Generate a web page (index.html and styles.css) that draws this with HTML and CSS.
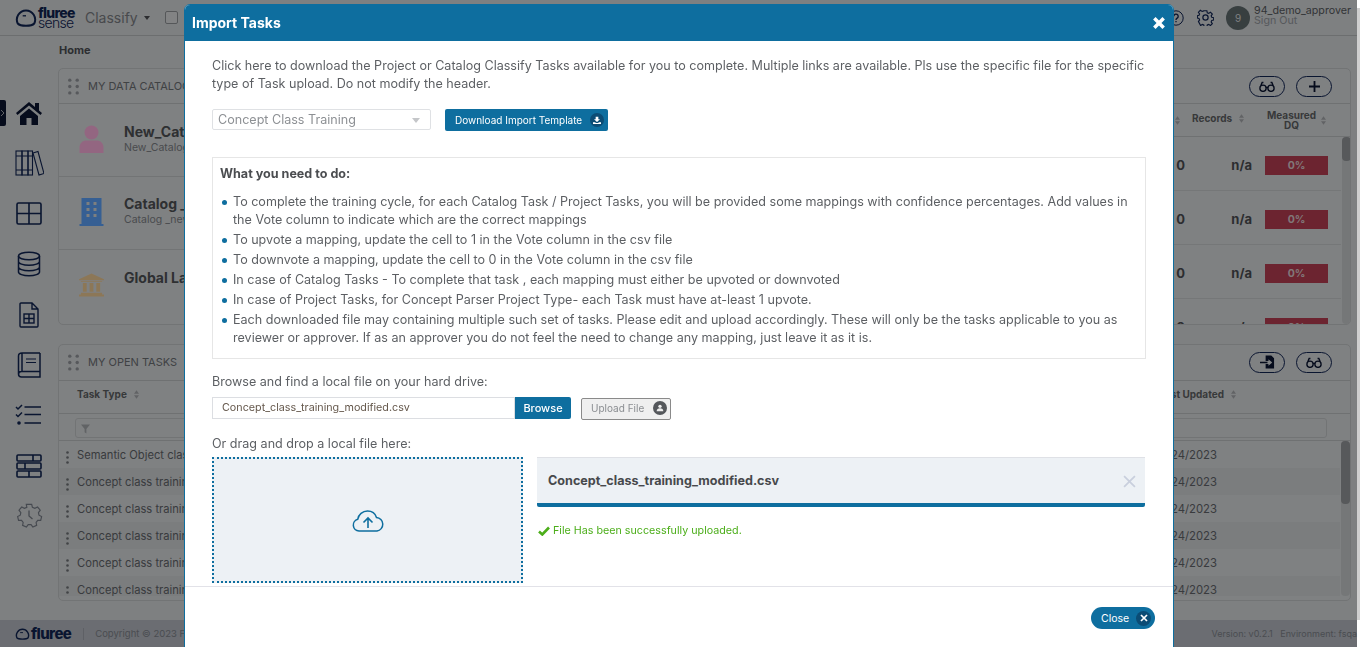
FILE: index.html
```html
<!DOCTYPE html>
<html lang="en">
<head>
<meta charset="utf-8">
<title>Import Tasks</title>
<link rel="stylesheet" href="styles.css">
</head>
<body>
<svg class="defs" width="0" height="0" aria-hidden="true">
  <symbol id="sort" viewBox="0 0 6 10"><path d="M3 0 6 4H0zM3 10 0 6h6z"/></symbol>
  <symbol id="grip" viewBox="0 0 10 16"><circle cx="1.5" cy="2" r="1.6"/><circle cx="8.5" cy="2" r="1.6"/><circle cx="1.5" cy="8" r="1.6"/><circle cx="8.5" cy="8" r="1.6"/><circle cx="1.5" cy="14" r="1.6"/><circle cx="8.5" cy="14" r="1.6"/></symbol>
  <symbol id="glasses" viewBox="0 0 18 12"><path d="M1 8a3.500 3.500 0 1 0 7 0 3.500 3.500 0 1 0-7 0M10 8a3.500 3.500 0 1 0 7 0 3.500 3.500 0 1 0-7 0M8 7.500c.7-.6 1.300-.6 2 0M1.200 7 3.500 1.500H5M16.800 7 14.500 1.500H13" fill="none" stroke="currentColor" stroke-width="1.500"/></symbol>
  <symbol id="tray" viewBox="0 0 12 12"><path d="M4 1h4v4h2.500L6 9 1.500 5H4zM0 9.500h3l1.500 1h3l1.500-1h3V12H0z" fill="currentColor"/></symbol>
  <symbol id="kebab" viewBox="0 0 3 13"><circle cx="1.500" cy="1.500" r="1.300"/><circle cx="1.500" cy="6.500" r="1.300"/><circle cx="1.500" cy="11.500" r="1.300"/></symbol>
</svg>

<div class="app">
  <header class="topbar">
    <div class="brand">
      <svg class="brand-face" viewBox="0 0 20 18"><path d="M2.500 14A8.300 8.300 0 1 1 17.500 14C15 16.800 5 16.800 2.500 14Z" fill="none" stroke="#102350" stroke-width="1.800"/><path d="M7 7h3" stroke="#102350" stroke-width="1.200"/></svg>
      <div class="brand-text"><b>fluree</b><span>sense</span></div>
    </div>
    <div class="app-name">Classify <i class="caret"></i></div>
    <span class="top-check"></span>
    <div class="top-right">
      <svg class="top-icon" viewBox="0 0 16 16"><circle cx="8" cy="8" r="7.200" fill="none" stroke="#102350" stroke-width="1"/><path d="M5.800 6.200a2.200 2.200 0 1 1 3.400 1.900c-.8.500-1.200 1-1.200 1.800M8 11v1.300" fill="none" stroke="#102350" stroke-width="1.300"/></svg>
      <svg class="top-icon gear" viewBox="0 0 24 24"><path d="M10 2h4l.6 3 2 .9 2.600-1.700 2.800 2.800-1.700 2.600.9 2 2.800.6v3.600l-2.800.6-.9 2 1.700 2.600-2.800 2.800-2.600-1.700-2 .9-.6 2.800h-4l-.6-2.800-2-.9-2.600 1.700L1.600 18l1.700-2.600-.9-2L0 12.800V9.400l2.400-.6.9-2L1.600 4.200 4.400 1.400 7 3.100l2.400-.9z" transform="translate(.5 .5) scale(.96)" fill="none" stroke="#102350" stroke-width="1.700"/><circle cx="12" cy="12" r="3.700" fill="none" stroke="#102350" stroke-width="1.700"/></svg>
      <span class="avatar">9</span>
      <div class="user"><span>94_demo_approver</span><span class="signout">Sign Out</span></div>
    </div>
  </header>

  <nav class="sidebar">
    <span class="side-toggle"><svg viewBox="0 0 6 10"><path d="M1 2l3 3-3 3" fill="none" stroke="#c7c9cc" stroke-width=".8"/></svg></span>
    <svg class="side-icon" viewBox="0 0 30 26"><path d="M2 13 15 2l6 5V3h4v7.500l3 2.500-1.500 2L15 5.500 3.500 15z M6 16 15 8.500 24 16v9h-6.500v-7h-5v7H6z" fill="#0a1430"/></svg>
    <svg class="side-icon" viewBox="0 0 30 26"><g fill="none" stroke="#102350" stroke-width="1.100"><rect x="2" y="1" width="6" height="24"/><rect x="8" y="1" width="6" height="24"/><rect x="14" y="1" width="4.500" height="24"/><path d="M19 3l5-1.500 6 22-5 1.500zM2 6h16M2 20h16"/></g></svg>
    <svg class="side-icon" viewBox="0 0 30 26"><g fill="none" stroke="#102350" stroke-width="1.600"><rect x="3" y="2" width="24" height="21" rx="1.500"/><path d="M15 2v21M3 12.500h24"/></g></svg>
    <svg class="side-icon" viewBox="0 0 30 26"><g fill="none" stroke="#102350" stroke-width="1.500"><ellipse cx="15" cy="5" rx="10.500" ry="3.800"/><path d="M4.500 5v16c0 2 4.500 3.800 10.500 3.800s10.500-1.800 10.500-3.800V5M4.500 10.500c0 2 4.500 3.800 10.500 3.800s10.500-1.800 10.500-3.800M4.500 16c0 2 4.500 3.800 10.500 3.800s10.500-1.800 10.500-3.800"/></g></svg>
    <svg class="side-icon" viewBox="0 0 30 26"><g fill="none" stroke="#102350" stroke-width="1.400"><path d="M7 1h11l6 6v17a1 1 0 0 1-1 1H7a1 1 0 0 1-1-1V2a1 1 0 0 1 1-1zM18 1v6h6"/><rect x="10" y="12" width="10" height="9"/><path d="M10 16.500h10M15 12v9"/></g></svg>
    <svg class="side-icon" viewBox="0 0 30 26"><g fill="none" stroke="#102350" stroke-width="1.500"><path d="M26 1H8C5.500 1 4.500 2.500 4.500 4v18c0 1.800 1.300 3 3 3H26v-5.500H7.500c-1.800 0-3 1.300-3 2.700M8 1v18.500M26 1v18.500"/><path d="M12 7h10M12 10.500h10" stroke-width="1.200"/></g></svg>
    <svg class="side-icon" viewBox="0 0 30 26"><g fill="none" stroke="#102350" stroke-width="1.500"><path d="M2 5l2 2 4-4M2 12.500l2 2 4-4M10.500 5H27M10.500 12.500H27M10.500 21H27"/></g><circle cx="5" cy="21" r="1.800" fill="#102350"/></svg>
    <svg class="side-icon" viewBox="0 0 30 26"><g fill="none" stroke="#102350" stroke-width="1.600"><rect x="3" y="2" width="24" height="6" rx="1"/><rect x="3" y="10" width="24" height="6" rx="1"/><rect x="3" y="18" width="24" height="6" rx="1"/><path d="M19 2v6M11 10v6M15 18v6"/></g></svg>
    <svg class="side-icon" viewBox="0 0 30 26"><g fill="none" stroke="#767c86" stroke-width="1.300"><path d="M12 1h6l.8 3.200 2.700 1.200 3-1.500 3 3.500-2 2.800.6 2.800 2.900 1.500-1 4.200-3.300.1-1.800 2.300.6 3.200-4.200 1.800-2-2.600h-3.200l-2 2.600-4.200-1.800.6-3.200-1.800-2.300-3.300-.1-1-4.200 2.900-1.500.6-2.800-2-2.800 3-3.500 3 1.500 2.700-1.200z" transform="translate(1.500 .5) scale(.9)"/><path d="M15 7.500V13l3.500 3"/></g></svg>
  </nav>

  <main class="main">
    <div class="crumb">Home</div>

    <section class="card card-catalogs">
      <div class="card-head">
        <svg class="grip"><use href="#grip"/></svg>
        <span class="card-title">MY DATA CATALOGS</span>
        <div class="pill-group">
          <span class="pill"><svg class="pill-icon"><use href="#glasses"/></svg></span>
          <span class="pill"><svg class="pill-icon plus" viewBox="0 0 12 12"><path d="M6 0v12M0 6h12" stroke="#0a1430" stroke-width="2"/></svg></span>
        </div>
      </div>
      <div class="cat-body">
        <div class="cat-list">
          <div class="cat-row">
            <svg class="cat-icon" viewBox="0 0 24 28"><circle cx="12" cy="7.500" r="7" fill="#f6abd8"/><path d="M0 28v-5c0-5 3-7.500 7-7.500h10c4 0 7 2.500 7 7.500v5z" fill="#f6abd8"/></svg>
            <div class="cat-text"><b>New_Catalog</b><span>New_Catalog</span></div>
          </div>
          <div class="cat-row">
            <svg class="cat-icon" viewBox="0 0 24 28"><path d="M2 0h20v26H2z M0 26h24v2H0z" fill="#5a9ff5"/><g fill="#d0d4d5"><rect x="7" y="4" width="3" height="3"/><rect x="14" y="4" width="3" height="3"/><rect x="7" y="10" width="3" height="3"/><rect x="14" y="10" width="3" height="3"/><rect x="7" y="16" width="3" height="3"/><rect x="14" y="16" width="3" height="3"/></g></svg>
            <div class="cat-text"><b>Catalog _new</b><span>Catalog _new</span></div>
          </div>
          <div class="cat-row">
            <svg class="cat-icon bank" viewBox="0 0 26 24"><path d="M13 0l13 6v1H0V6zM2 8h22v1H2zM4 10h4v9H4zM11 10h4v9h-4zM18 10h4v9h-4zM2 20h22v2H2zM0 22h26v2H0z" fill="#eac791"/></svg>
            <div class="cat-text"><b>Global Language</b></div>
          </div>
        </div>
        <div class="cat-table">
          <div class="cat-head">
            <div class="ch ch-a"><svg class="sort"><use href="#sort"/></svg></div>
            <div class="ch ch-b">Records<svg class="sort"><use href="#sort"/></svg></div>
            <div class="ch ch-c"><span>Measured<br>DQ</span><svg class="sort"><use href="#sort"/></svg></div>
          </div>
          <div class="cat-scroll">
            <div class="cat-rows">
              <div class="cat-data"><b>0</b><b>n/a</b><span class="dq">0%</span></div>
              <div class="cat-data"><b>0</b><b>n/a</b><span class="dq">0%</span></div>
              <div class="cat-data"><b>0</b><b>n/a</b><span class="dq">0%</span></div>
              <div class="cat-data"><b>0</b><b>n/a</b><span class="dq">0%</span></div>
            </div>
            <div class="vbar"><i class="thumb-a"></i></div>
          </div>
        </div>
      </div>
    </section>

    <section class="card card-tasks">
      <div class="card-head">
        <svg class="grip"><use href="#grip"/></svg>
        <span class="card-title">MY OPEN TASKS</span>
        <div class="pill-group">
          <span class="pill"><svg class="pill-icon file" viewBox="0 0 16 14"><path d="M6 0h6l3 3v11H6V9h3v2l4-3.500L9 4v2H6z" fill="#0a1430"/><path d="M0 7.500h8" stroke="#0a1430" stroke-width="1.500"/></svg></span>
          <span class="pill"><svg class="pill-icon"><use href="#glasses"/></svg></span>
        </div>
      </div>
      <div class="task-head">
        <b>Task Type</b><svg class="sort"><use href="#sort"/></svg>
        <b class="last-updated">Last Updated</b><svg class="sort"><use href="#sort"/></svg>
      </div>
      <div class="task-filter">
        <div class="filter-input"><svg viewBox="0 0 10 10"><path d="M0 0h10L6 5v5L4 8.500V5z"/></svg></div>
      </div>
      <div class="task-scroll">
        <div class="task-rows">
          <div class="task-row"><svg class="kebab"><use href="#kebab"/></svg><span>Semantic Object classification</span><em>11/24/2023</em></div>
          <div class="task-row"><svg class="kebab"><use href="#kebab"/></svg><span>Concept class training</span><em>11/24/2023</em></div>
          <div class="task-row"><svg class="kebab"><use href="#kebab"/></svg><span>Concept class training</span><em>11/24/2023</em></div>
          <div class="task-row"><svg class="kebab"><use href="#kebab"/></svg><span>Concept class training</span><em>11/24/2023</em></div>
          <div class="task-row"><svg class="kebab"><use href="#kebab"/></svg><span>Concept class training</span><em>11/24/2023</em></div>
          <div class="task-row"><svg class="kebab"><use href="#kebab"/></svg><span>Concept class training</span><em>11/24/2023</em></div>
        </div>
        <div class="vbar"><i class="thumb-b"></i></div>
      </div>
    </section>
  </main>

  <footer class="footer">
    <svg class="foot-face" viewBox="0 0 16 14"><path d="M2 11A6.500 6.500 0 1 1 14 11C12.500 13 3.500 13 2 11Z" fill="none" stroke="#102350" stroke-width="1.500"/><path d="M5.500 5.500h3" stroke="#102350"/></svg>
    <b class="foot-logo">fluree</b>
    <span class="foot-sep"></span>
    <span class="foot-copy">Copyright © 2023 Fluree PBC. All rights reserved.</span>
    <span class="foot-env">Version: v0.2.1 &nbsp; Environment: fsqa</span>
  </footer>
</div>
<div class="gutter"><i></i></div>

<div class="backdrop"></div>
<div class="modal">
  <div class="modal-head">
    <h1>Import Tasks</h1>
    <svg class="modal-x" viewBox="0 0 12 12"><path d="M2 2l8 8M10 2l-8 8" stroke="#fff" stroke-width="3"/></svg>
  </div>
  <div class="modal-body">
    <p class="intro">Click here to download the Project or Catalog Classify Tasks available for you to complete. Multiple links are available. Pls use the specific file for the specific type of Task upload. Do not modify the header.</p>
    <div class="template-row">
      <div class="select">Concept Class Training<i class="select-caret"></i></div>
      <button class="btn-download">Download Import Template<span class="btn-round"><svg><use href="#tray"/></svg></span></button>
    </div>
    <div class="todo">
      <h2>What you need to do:</h2>
      <ul>
        <li>To complete the training cycle, for each Catalog Task / Project Tasks, you will be provided some mappings with confidence percentages. Add values in the Vote column to indicate which are the correct mappings</li>
        <li>To upvote a mapping, update the cell to 1 in the Vote column in the csv file</li>
        <li>To downvote a mapping, update the cell to 0 in the Vote column in the csv file</li>
        <li>In case of Catalog Tasks - To complete that task , each mapping must either be upvoted or downvoted</li>
        <li>In case of Project Tasks, for Concept Parser Project Type- each Task must have at-least 1 upvote.</li>
        <li>Each downloaded file may containing multiple such set of tasks. Please edit and upload accordingly. These will only be the tasks applicable to you as reviewer or approver. If as an approver you do not feel the need to change any mapping, just leave it as it is.</li>
      </ul>
    </div>
    <label class="field-label">Browse and find a local file on your hard drive:</label>
    <div class="browse-row">
      <div class="file-input">Concept_class_training_modified.csv</div>
      <button class="btn-browse">Browse</button>
      <button class="btn-upload">Upload File<span class="btn-round grey"><svg viewBox="0 0 12 12"><circle cx="6" cy="3.500" r="2.500" fill="#eee"/><path d="M1 11c0-3 2-4.500 5-4.500s5 1.500 5 4.500z" fill="#eee"/></svg></span></button>
    </div>
    <label class="field-label drag-label">Or drag and drop a local file here:</label>
    <div class="drop-row">
      <div class="dropzone">
        <svg viewBox="0 0 32 22"><path d="M8 21H7a6 6 0 0 1-1.200-11.800C6.500 4.500 10.500 1 15.500 1c4.300 0 7.800 2.700 9 6.500A6.800 6.800 0 0 1 25 21z" fill="none" stroke="#0e6e9f" stroke-width="1.500"/><path d="M16 18V8M11.500 12.500 16 8l4.500 4.500" fill="none" stroke="#0e6e9f" stroke-width="1.600"/></svg>
      </div>
      <div class="file-col">
        <div class="file-card">
          <b>Concept_class_training_modified.csv</b>
          <svg viewBox="0 0 12 12"><path d="M1 1l10 10M11 1L1 11" stroke="#c9cfdd" stroke-width="1.600"/></svg>
        </div>
        <div class="success">
          <svg viewBox="0 0 12 10"><path d="M1 5.500 4.300 8.500 11 1.500" fill="none" stroke="#4cae1a" stroke-width="2.600"/></svg>
          File Has been successfully uploaded.
        </div>
      </div>
    </div>
  </div>
  <div class="modal-foot">
    <button class="btn-close">Close<span class="btn-round"><svg viewBox="0 0 12 12"><path d="M1.500 1.500l9 9M10.500 1.500l-9 9" stroke="#fff" stroke-width="2.600"/></svg></span></button>
  </div>
</div>
</body>
</html>
```

FILE: styles.css
```css
* { box-sizing: border-box; }
html, body { margin: 0; height: 647px; overflow: hidden; }
body {
  display: flex;
  background: #fff;
  font-family: Inter, "Liberation Sans", sans-serif;
  color: #5c5f63;
  font-size: 12px;
}
.defs { position: absolute; }
button { font-family: inherit; cursor: pointer; border: 0; }

.app {
  width: 1357px;
  height: 647px;
  flex: none;
  display: grid;
  grid-template-columns: 58px 1fr;
  grid-template-rows: 36px 1fr 27px;
  background: #d2d5d7;
}
.gutter { flex: 1; padding: 8px 0 27px; }
.gutter i { display: block; height: 100%; background: #cfcfcf; }

/* top bar */
.topbar {
  grid-column: 1 / 3;
  display: flex;
  align-items: center;
  padding-left: 15px;
  border-bottom: 1px solid #b4b7ba;
}
.brand { display: flex; align-items: center; gap: 1px; width: 70px; }
.brand-face { width: 22px; height: 20px; }
.brand-text { display: flex; flex-direction: column; color: #102350; line-height: 10px; font-size: 14px; letter-spacing: -.7px; }
.brand-text b { font-weight: 800; }
.brand-text span { font-weight: 300; }
.app-name { font-size: 14px; color: #787b80; display: flex; align-items: center; gap: 6px; }
.caret { border: 3px solid transparent; border-top: 4px solid #4a4c50; margin-top: 4px; }
.top-check { width: 13px; height: 13px; border: 1px solid #8e9195; background: #d9dbdd; margin-left: 15px; border-radius: 2px; }
.top-right { margin-left: auto; display: flex; align-items: center; }
.top-icon { width: 16px; height: 16px; margin-right: 13px; }
.top-icon.gear { width: 17px; height: 17px; margin-right: 12px; }
.avatar { width: 24px; height: 24px; border-radius: 50%; background: #5e6a6c; color: #d2d5d7; font-size: 10px; display: flex; align-items: center; justify-content: center; margin-right: 4px; }
.user { display: flex; flex-direction: column; line-height: 10px; font-size: 10.700px; width: 103px; color: #55585c; padding-bottom: 3px; }
.signout { color: #90949a; }

/* sidebar */
.sidebar { display: flex; flex-direction: column; align-items: center; padding-top: 64px; gap: 24.400px; position: relative; }
.side-toggle { position: absolute; left: 0; top: 64px; width: 6px; height: 26px; background: #0a1430; display: flex; align-items: center; border-radius: 0 2px 2px 0; }
.side-toggle svg { width: 6px; height: 10px; }
.side-icon { width: 30px; height: 26px; flex: none; }

/* main */
.main { min-width: 0; padding-right: 6px; }
.crumb { height: 32px; padding: 8px 0 0 1px; font-size: 11px; font-weight: 700; color: #4b4e52; line-height: 13px; }
.card { background: #d4d7d9; border: 1px solid #bec1c3; border-radius: 5px; overflow: hidden; }
.card-catalogs { height: 257px; }
.card-tasks { height: 257px; margin-top: 19px; }
.card-head { height: 35px; display: flex; align-items: center; padding-left: 9px; border-bottom: 1px solid #b9bcbe; }
.card-tasks .card-head { height: 36px; padding-bottom: 1px; }
.grip { width: 11px; height: 17px; fill: #92959a; flex: none; }
.card-title { font-size: 11px; color: #6b6e72; margin-left: 9px; }
.pill-group { margin-left: auto; display: flex; gap: 11px; padding-right: 18px; }
.pill { width: 36px; height: 21px; border: 1px solid #102350; border-radius: 11px; display: flex; align-items: center; justify-content: center; }
.pill-icon { width: 16px; height: 11px; color: #0a1430; }
.pill-icon.plus { width: 11px; height: 11px; }
.pill-icon.file { width: 15px; height: 14px; }

/* catalogs */
.cat-body { display: flex; height: 221px; }
.cat-list { width: 1001px; flex: none; }
.cat-row { height: 73px; display: flex; align-items: center; gap: 20px; padding: 0 0 3px 20px; border-bottom: 1px solid #bec1c3; }
.cat-row:first-child { padding-bottom: 2px; }
.cat-row:last-child { border-bottom: 0; padding-bottom: 18px; }
.cat-icon { width: 25px; height: 28px; flex: none; }
.bank { margin-top: 14px; }
.cat-text { display: flex; flex-direction: column; }
.cat-text b { font-size: 14px; line-height: 17px; color: #4e5054; }
.cat-text span { font-size: 10.500px; line-height: 16px; color: #7a7d82; }
.cat-table { flex: 1; min-width: 0; }
.cat-head { display: flex; height: 33px; border-bottom: 1px solid #b9bcbe; font-size: 10px; font-weight: 700; color: #5d5f62; align-items: center; }
.ch { display: flex; align-items: center; }
.ch-a { width: 126px; justify-content: flex-end; padding-right: 6px; }
.ch-b { width: 76px; padding: 0 0 4px 6px; gap: 7px; }
.ch-c { padding-left: 5px; gap: 5px; line-height: 10px; text-align: center; }
.sort { width: 5px; height: 9px; fill: #a2a5a9; flex: none; }
.cat-scroll { display: flex; height: 187px; overflow: hidden; }
.cat-rows { width: 281px; flex: none; }
.cat-data { height: 54px; display: grid; grid-template-columns: 125px 67px 76px; align-items: center; padding-top: 3px; border-bottom: 1px solid #c4c7c9; font-size: 13px; color: #4a4c50; text-align: right; }
.dq { margin-left: 13px; height: 19px; background: #b43c50; color: #d8c6c9; font-size: 10.500px; font-weight: 700; line-height: 19px; text-align: center; }
.vbar { width: 9px; margin-left: 1px; background: #c4c7c9; border-radius: 4px; flex: none; }
.vbar i { display: block; background: #929598; border-radius: 4px; }
.thumb-a { height: 24px; }
.thumb-b { height: 63px; }

/* tasks */
.task-head { height: 33px; display: flex; align-items: center; padding: 0 114px 6px 18px; gap: 7px; font-size: 10px; color: #5d5f62; border-bottom: 1px solid #b9bcbe; }
.last-updated { margin-left: auto; }
.task-filter { height: 27px; padding: 4px 23px 3px 16px; border-bottom: 1px solid #b9bcbe; }
.filter-input { height: 20px; border: 1px solid #bec1c3; border-radius: 3px; padding: 3px 0 0 5px; }
.filter-input svg { width: 9px; height: 10px; fill: #a2a5a9; display: block; margin-top: 2px; }
.task-scroll { display: flex; height: 155px; overflow: hidden; }
.task-rows { width: 1281px; flex: none; }
.task-row { height: 27px; display: flex; align-items: center; padding: 0 123px 0 7px; font-size: 11.200px; color: #606368; gap: 8px; }
.task-row:nth-child(even) { background: #cdd0d2; }
.kebab { width: 3px; height: 13px; fill: #6e7176; margin-top: 6px; flex: none; }
.task-row em { margin-left: auto; font-style: normal; font-size: 11.300px; }

/* footer */
.footer { grid-column: 1 / 3; background: #b2b6be; display: flex; align-items: center; padding-left: 15px; font-size: 9.500px; color: #7c8087; }
.foot-face { width: 15px; height: 14px; }
.foot-logo { font-size: 15px; font-weight: 800; color: #102350; letter-spacing: -.6px; margin-left: 1px; }
.foot-sep { width: 1px; height: 12px; background: #9da1a8; margin: 0 11px 0 12px; }
.foot-env { margin-left: auto; white-space: nowrap; font-size: 9px; }

/* modal */
.backdrop { position: fixed; left: 0; top: 0; width: 1357px; height: 647px; background: rgba(0, 0, 0, .4); }
.modal {
  position: fixed;
  left: 184px;
  top: 4px;
  width: 990px;
  height: 660px;
  background: #fff;
  border: 1px solid #0e6e9f;
  border-radius: 6px 6px 0 0;
  overflow: hidden;
}
.modal-head { height: 36px; background: #0e6e9f; display: flex; align-items: center; justify-content: space-between; padding: 0 7px 2px 7px; }
.modal-head h1 { margin: 0; font-size: 14px; font-weight: 700; color: #fff; }
.modal-x { width: 14px; height: 14px; margin-top: 2px; }
.modal-body { height: 545px; padding: 16px 27px 0 27px; font-size: 12.570px; line-height: 18px; color: #5c5f63; overflow: hidden; }
.intro { margin: 0; padding-right: 1px; }
.template-row { display: flex; gap: 14px; margin-top: 16px; }
.select { width: 219px; height: 21px; border: 1px solid #dfe1e4; border-radius: 2px; padding-left: 5px; line-height: 19px; color: #8d9094; display: flex; align-items: center; justify-content: space-between; }
.select-caret { border: 4px solid transparent; border-top: 5px solid #c4c6c9; margin: 5px 10px 0 0; }
.btn-download { height: 22px; width: 163px; background: #0e6e9f; color: #fff; border-radius: 2px; font-size: 10px; display: flex; align-items: center; justify-content: space-between; padding: 0 4px 1px 10px; }
.btn-round { width: 14px; height: 14px; border-radius: 50%; background: #0b4c75; color: #fff; display: flex; align-items: center; justify-content: center; flex: none; }
.btn-round svg { width: 8px; height: 8px; }
.btn-round.grey { background: #54575b; }
.todo { margin-top: 26px; height: 202px; border: 1px solid #e6e6e6; padding: 7px 7px; }
.todo h2 { margin: 0 0 10px; font-size: 12.570px; font-weight: 700; line-height: 18px; color: #4b4d50; }
.todo ul { margin: 0; padding: 0; list-style: none; }
.todo li { position: relative; padding-left: 13px; margin-bottom: 2px; }
.todo li::before { content: ""; position: absolute; left: 2px; top: 7px; width: 5px; height: 5px; border-radius: 50%; background: #0e6e9f; }
.field-label { display: block; margin-top: 14px; }
.browse-row { display: flex; margin-top: 6px; align-items: flex-start; }
.file-input { width: 303px; height: 22px; border: 1px solid #dcdee2; padding-left: 9px; font-size: 10.750px; line-height: 20px; color: #65584c; }
.btn-browse { width: 56px; height: 22px; padding-bottom: 2px; background: #0e6e9f; color: #fff; font-size: 11px; font-weight: 500; border-radius: 0 2px 2px 0; }
.btn-upload { width: 90px; height: 22px; margin: 1px 0 0 10px; background: #efefef; border: 1px solid #8a8a8a; border-radius: 2px; color: #8a8d91; font-size: 10px; display: flex; align-items: center; justify-content: space-between; padding: 0 3px 2px 9px; }
.drag-label { margin-top: 15px; }
.drop-row { display: flex; gap: 14px; margin-top: 4px; }
.dropzone { width: 311px; height: 126px; padding-top: 2px; background: #edf1f5; border: 2px dotted #0e6e9f; display: flex; align-items: center; justify-content: center; }
.dropzone svg { width: 32px; height: 22px; }
.file-col { flex: 1; min-width: 0; padding-right: 1px; }
.file-card { height: 50px; background: #edf1f5; border-top: 1px solid #dfe1e6; border-bottom: 4px solid #0e6e9f; border-radius: 0 0 2px 2px; display: flex; align-items: center; justify-content: space-between; padding: 1px 9px 0 11px; }
.file-card b { font-size: 12.600px; color: #47494c; }
.file-card svg { width: 13px; height: 13px; }
.success { display: flex; align-items: center; gap: 3px; margin-top: 15px; font-size: 10.730px; color: #4cae1a; padding-left: 1px; }
.success svg { width: 12px; height: 10px; }
.modal-foot { border-top: 1px solid #e2e2e8; padding: 20px 18px 0 0; display: flex; justify-content: flex-end; }
.btn-close { width: 64px; height: 22px; background: #0e6e9f; color: #fff; border-radius: 11px; font-size: 10.500px; display: flex; align-items: center; justify-content: space-between; padding: 0 4px 0 10px; }
.btn-close .btn-round { width: 15px; height: 15px; }
```
